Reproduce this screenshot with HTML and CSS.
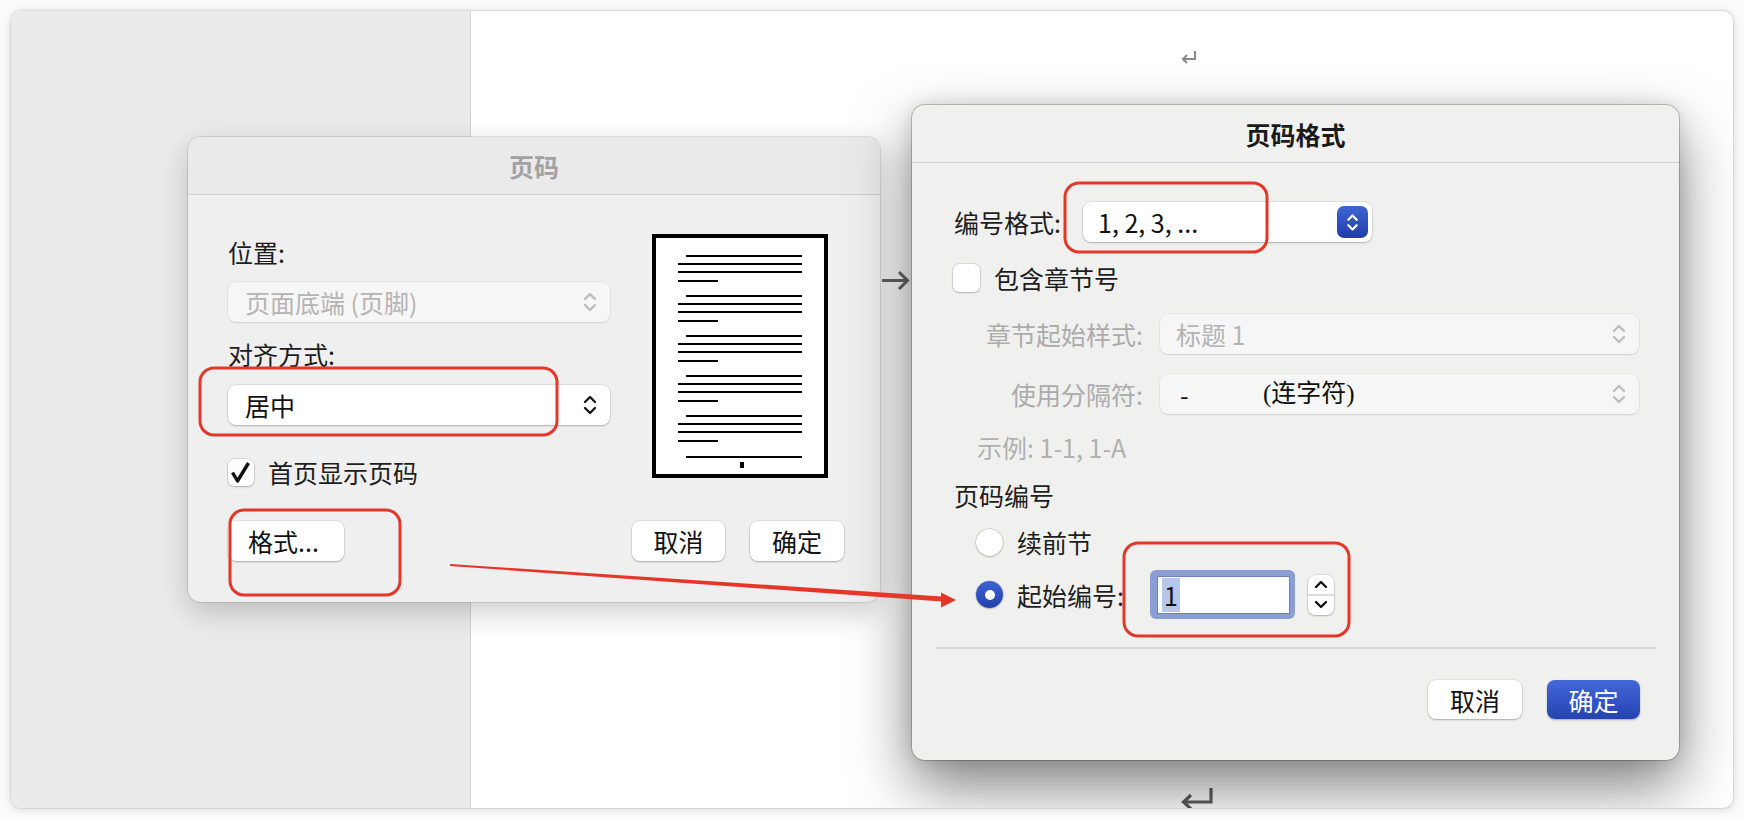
FILE: index.html
```html
<!DOCTYPE html>
<html lang="zh-CN">
<head>
<meta charset="utf-8">
<title>页码</title>
<link rel="stylesheet" href="styles.css">
</head>
<body>
<div class="window">
  <aside class="sidebar"></aside>
  <main class="page">
    <svg class="mark-top" width="17" height="14" viewBox="0 0 17 14"><path d="M15 1V9H3M7 5L3 9L7 13" fill="none" stroke="#8a8a8a" stroke-width="2"/></svg>
    <svg class="doc-arrow" width="28" height="25" viewBox="0 0 28 25"><path d="M0 12.5H25M17 4L25.5 12.5L17 21" fill="none" stroke="#666" stroke-width="3"/></svg>
    <svg class="mark-bottom" width="34" height="21" viewBox="0 0 34 21"><path d="M31 1V15H4M11 8L3.5 15L11 22" fill="none" stroke="#5e5e5e" stroke-width="3.2"/></svg>
  </main>

  <section class="dialog dlg-left">
    <header class="titlebar inactive">页码</header>
    <div class="dlg-body">
      <div class="top-row">
        <div class="left-col">
          <div class="label">位置:</div>
          <div class="popup disabled pos-popup"><span>页面底端 (页脚)</span>
            <svg class="chev" viewBox="0 0 14 22" width="14" height="22"><path d="M2 8L7 3L12 8M2 14L7 19L12 14" fill="none" stroke="currentColor" stroke-width="2.4" stroke-linecap="round" stroke-linejoin="round"/></svg>
          </div>
          <div class="label lbl-align">对齐方式:</div>
          <div class="popup align-popup"><span>居中</span>
            <svg class="chev" viewBox="0 0 14 22" width="14" height="22"><path d="M2 8L7 3L12 8M2 14L7 19L12 14" fill="none" stroke="currentColor" stroke-width="2.4" stroke-linecap="round" stroke-linejoin="round"/></svg>
          </div>
          <div class="check-row first-page">
            <span class="checkbox"><svg width="26" height="27" viewBox="0 0 26 27"><path d="M4.5 13.5L9.5 22L20.5 4" fill="none" stroke="#111" stroke-width="3.4" stroke-linejoin="round"/></svg></span>
            <span>首页显示页码</span>
          </div>
        </div>
        <div class="preview">
          <svg width="176" height="244" viewBox="0 0 176 244">
            <rect x="2" y="2" width="172" height="240" fill="#fff" stroke="#000" stroke-width="4"/>
            <g fill="#000">
              <rect x="34" y="21" width="116" height="2"/><rect x="26" y="29" width="124" height="2"/><rect x="26" y="37" width="124" height="2"/><rect x="26" y="46" width="40" height="2"/>
              <rect x="34" y="61" width="116" height="2"/><rect x="26" y="69" width="124" height="2"/><rect x="26" y="77" width="124" height="2"/><rect x="26" y="86" width="40" height="2"/>
              <rect x="34" y="101" width="116" height="2"/><rect x="26" y="109" width="124" height="2"/><rect x="26" y="117" width="124" height="2"/><rect x="26" y="126" width="40" height="2"/>
              <rect x="34" y="141" width="116" height="2"/><rect x="26" y="149" width="124" height="2"/><rect x="26" y="157" width="124" height="2"/><rect x="26" y="166" width="40" height="2"/>
              <rect x="34" y="181" width="116" height="2"/><rect x="26" y="189" width="124" height="2"/><rect x="26" y="197" width="124" height="2"/><rect x="26" y="206" width="40" height="2"/>
              <rect x="34" y="222" width="116" height="2"/>
              <rect x="88" y="228" width="4" height="6"/>
            </g>
          </svg>
        </div>
      </div>
      <div class="btn-row">
        <button class="btn w-format">格式...</button>
        <button class="btn w-cancel push">取消</button>
        <button class="btn w-ok">确定</button>
      </div>
    </div>
  </section>

  <section class="dialog dlg-right">
    <header class="titlebar">页码格式</header>
    <div class="dlg-body">
      <div class="fmt-row">
        <span class="fmt-label">编号格式:</span>
        <div class="popup fmt-popup"><span>1, 2, 3, ...</span>
          <span class="blue-step"><svg viewBox="0 0 14 22" width="13" height="21"><path d="M2.5 8L7 3.5L11.5 8M2.5 14L7 18.5L11.5 14" fill="none" stroke="#fff" stroke-width="2.4" stroke-linecap="round" stroke-linejoin="round"/></svg></span>
        </div>
      </div>
      <div class="check-row chapter">
        <span class="checkbox empty"></span>
        <span>包含章节号</span>
      </div>
      <div class="opt-row r-style">
        <span class="opt-label">章节起始样式:</span>
        <div class="popup disabled"><span>标题 1</span>
          <svg class="chev" viewBox="0 0 14 22" width="14" height="22"><path d="M2 8L7 3L12 8M2 14L7 19L12 14" fill="none" stroke="currentColor" stroke-width="2.4" stroke-linecap="round" stroke-linejoin="round"/></svg>
        </div>
      </div>
      <div class="opt-row r-sep">
        <span class="opt-label">使用分隔符:</span>
        <div class="popup disabled sep-popup"><span class="sep-val"><span class="dash">-</span><span class="serif">(连字符)</span></span>
          <svg class="chev" viewBox="0 0 14 22" width="14" height="22"><path d="M2 8L7 3L12 8M2 14L7 19L12 14" fill="none" stroke="currentColor" stroke-width="2.4" stroke-linecap="round" stroke-linejoin="round"/></svg>
        </div>
      </div>
      <div class="example">示例:&nbsp;1-1, 1-A</div>
      <div class="section-title">页码编号</div>
      <div class="radio-row r1">
        <span class="radio"></span>
        <span>续前节</span>
      </div>
      <div class="radio-row r2">
        <span class="radio on"></span>
        <span class="start-label">起始编号:</span>
        <div class="field-ring"><div class="field"><span class="sel">1</span></div></div>
        <div class="stepper">
          <span class="half"><svg viewBox="0 0 14 10" width="14" height="10"><path d="M2 8L7 3L12 8" fill="none" stroke="#111" stroke-width="2.4" stroke-linecap="round" stroke-linejoin="round"/></svg></span>
          <span class="half lower"><svg viewBox="0 0 14 10" width="14" height="10"><path d="M2 2L7 7L12 2" fill="none" stroke="#111" stroke-width="2.4" stroke-linecap="round" stroke-linejoin="round"/></svg></span>
        </div>
      </div>
      <div class="separator"></div>
      <div class="btn-row right">
        <button class="btn w-cancel2">取消</button>
        <button class="btn primary w-ok2">确定</button>
      </div>
    </div>
  </section>
</div>

<svg class="annotations" width="1744" height="820" viewBox="0 0 1744 820">
  <g fill="none" stroke="#e4372a" stroke-width="3">
    <rect x="200" y="368" width="357" height="67" rx="14"/>
    <rect x="230" y="510" width="170" height="85" rx="14"/>
    <rect x="1065" y="183" width="202" height="69" rx="14"/>
    <rect x="1124" y="543" width="225" height="93" rx="14"/>
  </g>
  <polygon fill="#e4372a" points="450,564 942,596.5 942,601.5 450,566"/>
  <polygon fill="#e4372a" points="956,600 941,592.5 941,607.5"/>
</svg>
</body>
</html>
```

FILE: styles.css
```css
* { box-sizing: border-box; }
html, body { margin: 0; padding: 0; }
body {
  width: 1744px;
  height: 820px;
  padding: 11px;
  background: #fbfbfb;
  font-family: "Noto Sans CJK SC", "Noto Sans", sans-serif;
  font-size: 25px;
  line-height: 30px;
  color: #1d1d1d;
  position: relative;
  overflow: hidden;
}

.window {
  position: relative;
  width: 1722px;
  height: 797px;
  border-radius: 10px;
  overflow: hidden;
  display: flex;
  background: #fff;
  box-shadow: 0 0 0 1px rgba(0,0,0,.07), 0 1px 10px rgba(0,0,0,.16);
}
.sidebar {
  flex: none;
  width: 460px;
  background: #ebebeb;
  border-right: 1px solid #d3d3d3;
}
.page {
  flex: 1;
  display: flex;
  flex-direction: column;
  align-items: flex-start;
  padding-top: 39px;
}
.mark-top { margin-left: 709px; flex: none; }
.doc-arrow { margin-left: 411px; margin-top: 204px; flex: none; }
.mark-bottom { margin-top: auto; margin-left: 709px; flex: none; }

/* dialogs */
.dialog {
  position: absolute;
  display: flex;
  flex-direction: column;
  border-radius: 13px;
  background: #efefef;
}
.dlg-left {
  left: 177px;
  top: 126px;
  width: 692px;
  height: 465px;
  box-shadow: 0 0 0 1px rgba(0,0,0,.1), 0 10px 30px rgba(0,0,0,.2);
}
.dlg-right {
  left: 901px;
  top: 94px;
  width: 767px;
  height: 655px;
  background: #f0f0ef;
  box-shadow: 0 0 0 1px rgba(0,0,0,.2), 0 26px 60px rgba(0,0,0,.5), 0 0 18px rgba(0,0,0,.12);
}
.titlebar {
  flex: none;
  height: 58px;
  border-bottom: 1px solid #cfcfcf;
  display: flex;
  align-items: center;
  justify-content: center;
  font-weight: 700;
  font-size: 25px;
  color: #1a1a1a;
}
.titlebar.inactive {
  color: #a2a2a2;
  background: #eaeaea;
  border-radius: 13px 13px 0 0;
}
.dlg-body {
  flex: 1;
  display: flex;
  flex-direction: column;
}
.dlg-left .dlg-body { padding: 42px 36px 40px 40px; }
.dlg-right .dlg-body { padding: 39px 39px 41px 42px; }

.top-row { display: flex; align-items: flex-start; }
.left-col { width: 382px; display: flex; flex-direction: column; }
.label { height: 30px; }
.lbl-align { margin-top: 17px; }
.pos-popup { margin-top: 15px; height: 41px; }
.align-popup { margin-top: 16px; }
.preview { margin-left: 42px; margin-top: -3px; height: 244px; }
.preview svg { display: block; }

/* popups */
.popup {
  display: flex;
  align-items: center;
  justify-content: space-between;
  height: 40px;
  padding: 0 13px 0 17px;
  background: #fff;
  border-radius: 8px;
  color: #111;
  box-shadow: 0 1px 2px rgba(0,0,0,.22), 0 0 0 .5px rgba(0,0,0,.12);
}
.popup.disabled {
  background: #f6f6f6;
  color: #b4b4b4;
  box-shadow: 0 1px 1.5px rgba(0,0,0,.1), 0 0 0 .5px rgba(0,0,0,.07);
}
.popup.disabled .chev { color: #bcbcbc; }
.chev { color: #151515; flex: none; }

/* checkbox */
.check-row { display: flex; align-items: center; gap: 14px; }
.first-page { margin-top: 32px; height: 30px; }
.checkbox {
  width: 26px;
  height: 27px;
  border-radius: 6px;
  background: #fff;
  flex: none;
  box-shadow: 0 0 0 .5px rgba(0,0,0,.18), 0 1px 2px rgba(0,0,0,.18);
}
.checkbox svg { display: block; }
.checkbox.empty { width: 27px; height: 28px; }
.chapter { margin-top: 22px; height: 28px; margin-left: -1px; }

/* buttons */
.btn-row { display: flex; gap: 25px; margin-top: 34px; }
.btn-row.right { justify-content: flex-end; margin-top: 31px; }
.btn {
  height: 40px;
  border: none;
  border-radius: 8px;
  background: #fff;
  font: inherit;
  color: #111;
  padding: 0;
  text-align: center;
  box-shadow: 0 1px 2px rgba(0,0,0,.25), 0 0 0 .5px rgba(0,0,0,.1);
}
.w-format { width: 116px; text-align: left; padding-left: 20px; }
.push { margin-left: auto; }
.w-cancel { width: 93px; }
.w-ok { width: 94px; }
.w-cancel2 { width: 94px; height: 39px; }
.w-ok2 { width: 93px; height: 39px; }
.btn.primary {
  color: #fff;
  background: linear-gradient(#4468d8, #2443b2);
  box-shadow: 0 1px 2px rgba(0,0,0,.3);
}

/* right dialog */
.fmt-row { display: flex; align-items: center; height: 40px; }
.fmt-label { width: 129px; flex: none; }
.fmt-popup { width: 289px; padding: 0 4px 0 15px; }
.blue-step {
  width: 31px;
  height: 32px;
  border-radius: 7px;
  background: linear-gradient(#4064d4, #1f3da9);
  display: flex;
  align-items: center;
  justify-content: center;
}
.blue-step svg { display: block; }

.opt-row {
  display: grid;
  grid-template-columns: 189px 479px;
  column-gap: 17px;
  align-items: center;
  height: 40px;
}
.r-style { margin-top: 22px; }
.r-sep { margin-top: 20px; }
.opt-label { text-align: right; color: #ababab; }
.opt-row .popup { padding-left: 16px; }
.sep-val { display: flex; color: #111; }
.dash { display: inline-block; width: 87px; padding-left: 4px; }
.serif { font-family: "Liberation Serif", "Noto Sans CJK SC", serif; }

.example { margin-top: 18px; margin-left: 23px; color: #b0b0b0; height: 30px; }
.section-title { margin-top: 18px; height: 30px; }

.radio-row { display: flex; align-items: center; margin-left: 22px; gap: 14px; }
.r1 { margin-top: 17px; height: 30px; }
.r2 { margin-top: 13px; height: 49px; }
.radio {
  width: 27px;
  height: 27px;
  border-radius: 50%;
  background: #fff;
  flex: none;
  box-shadow: 0 0 0 .5px rgba(0,0,0,.2), 0 1px 2px rgba(0,0,0,.18);
}
.radio.on {
  background: linear-gradient(#3f63d3, #2040ab);
  display: flex;
  align-items: center;
  justify-content: center;
}
.radio.on::after {
  content: "";
  width: 10px;
  height: 10px;
  border-radius: 50%;
  background: #fff;
}
.start-label { width: 119px; flex: none; }
.field-ring {
  width: 145px;
  height: 49px;
  padding: 6px 5px 5px 7px;
  background: #8a9ed2;
  border-radius: 6px;
  flex: none;
}
.field {
  height: 38px;
  background: #fff;
  border: 1px solid #6d83bd;
  display: flex;
  align-items: center;
  padding-left: 4px;
}
.sel { background: #b7c7ea; padding: 0 2px; line-height: 34px; color: #111; }
.stepper {
  margin-left: -1px;
  width: 26px;
  height: 40px;
  border-radius: 7px;
  background: #fff;
  display: flex;
  flex-direction: column;
  flex: none;
  box-shadow: 0 0 0 .5px rgba(0,0,0,.15), 0 1px 2px rgba(0,0,0,.22);
}
.half { flex: 1; display: flex; align-items: center; justify-content: center; }
.half.lower { border-top: 2px solid #dcdcdc; }
.half svg { display: block; }

.separator {
  margin: 28px -16px 0 -18px;
  height: 2px;
  background: #dcdcdb;
}

.annotations {
  position: absolute;
  left: 0;
  top: 0;
  pointer-events: none;
}
```
